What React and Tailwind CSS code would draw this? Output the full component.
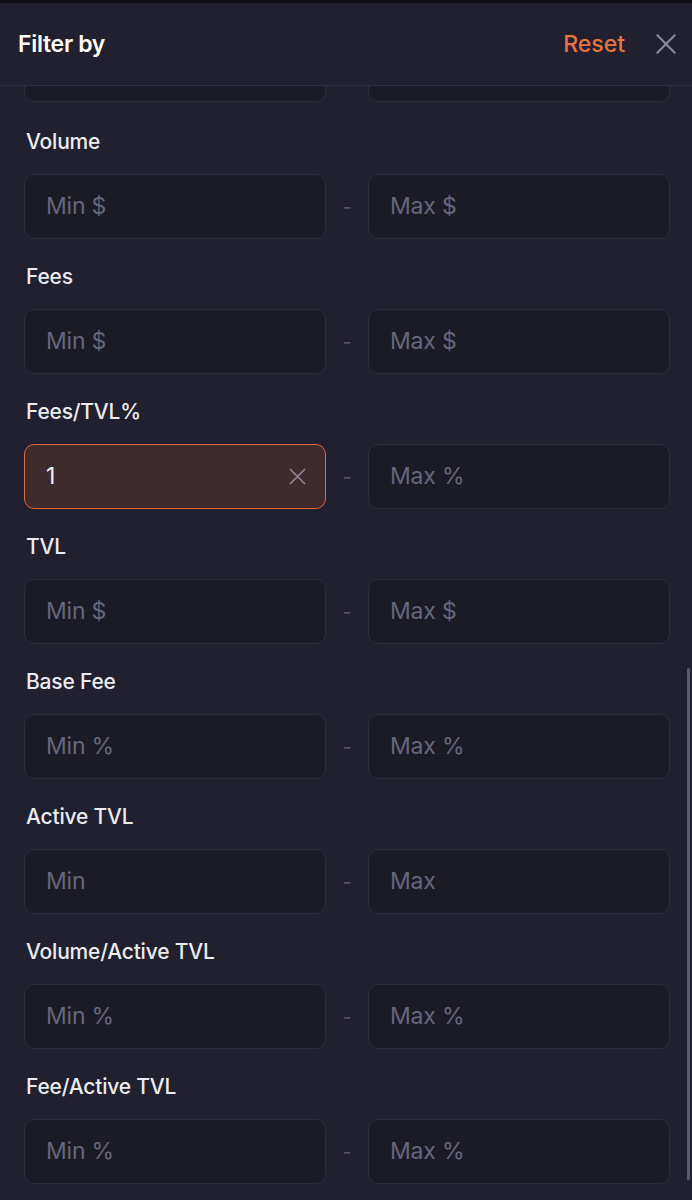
import React, { useState } from 'react';

const fields = [
  { label: 'Volume', min: 'Min $', max: 'Max $' },
  { label: 'Fees', min: 'Min $', max: 'Max $' },
  { label: 'Fees/TVL%', min: 'Min %', max: 'Max %' },
  { label: 'TVL', min: 'Min $', max: 'Max $' },
  { label: 'Base Fee', min: 'Min %', max: 'Max %' },
  { label: 'Active TVL', min: 'Min', max: 'Max' },
  { label: 'Volume/Active TVL', min: 'Min %', max: 'Max %' },
  { label: 'Fee/Active TVL', min: 'Min %', max: 'Max %' },
];

const Cross = ({ className }) => (
  <svg viewBox="0 0 24 24" fill="none" stroke="currentColor" strokeWidth="2" strokeLinecap="round" className={className}>
    <path d="M4 4l16 16M20 4L4 20" />
  </svg>
);

const Box = ({ placeholder, value, onClear }) => {
  const active = value !== undefined && value !== '';
  return (
    <div
      className={
        'w-[302px] h-[65px] rounded-[10px] border flex items-center pl-[21px] pr-[17px] ' +
        (active ? 'bg-[#3f2a2e] border-[#e0693d]' : 'bg-[#1b1b25] border-[#2d2d3b]')
      }
    >
      {active ? (
        <>
          <span className="flex-1 text-[23px] text-[#f2f2f5]">{value}</span>
          <button onClick={onClear} className="text-[#8d8694]">
            <Cross className="w-[21px] h-[21px]" />
          </button>
        </>
      ) : (
        <span className="text-[23px] tracking-[-0.2px] text-[#67667c]">{placeholder}</span>
      )}
    </div>
  );
};

const App = () => {
  const [values, setValues] = useState({ 'Fees/TVL%': '1' });

  return (
    <div className="w-[692px] h-[1200px] overflow-hidden bg-[#0d0d13] flex flex-col relative" style={{ fontFamily: 'Inter, "Noto Sans", sans-serif' }}>
      <div className="mt-[3px] h-[83px] shrink-0 bg-[#21202e] border-b border-[#2f2e3e] flex items-center pl-[18px] pr-[13px]">
        <div className="flex-1 text-[23px] font-semibold tracking-[-0.3px] text-white">Filter by</div>
        <button onClick={() => setValues({})} className="text-[23px] font-medium text-[#e8743b] mr-[28px]">Reset</button>
        <Cross className="w-[26px] h-[26px] text-[#8a8996]" />
      </div>

      <div className="flex-1 bg-[#21202e] pl-[24px] pr-[22px] overflow-hidden">
        <div className="-mt-[49px] flex items-center justify-between">
          <Box placeholder="" />
          <Box placeholder="" />
        </div>
        {fields.map((f, i) => (
          <div key={f.label} className={i === 0 ? 'mt-[28px]' : 'mt-[26px]'}>
            <div className="h-6 leading-6 text-[21px] font-medium tracking-[-0.2px] text-[#ececf0] pl-[2px]">{f.label}</div>
            <div className="mt-[20px] flex items-center justify-between">
              <Box
                placeholder={f.min}
                value={values[f.label]}
                onClear={() => setValues((v) => ({ ...v, [f.label]: '' }))}
              />
              <span className="text-[#55546a] text-[20px] w-[16px] text-center">-</span>
              <Box placeholder={f.max} />
            </div>
          </div>
        ))}
      </div>

      <div className="absolute right-[2px] top-[668px] w-[3px] h-[512px] rounded-full bg-[#5c5b68]" />
    </div>
  );
};

export default App;
